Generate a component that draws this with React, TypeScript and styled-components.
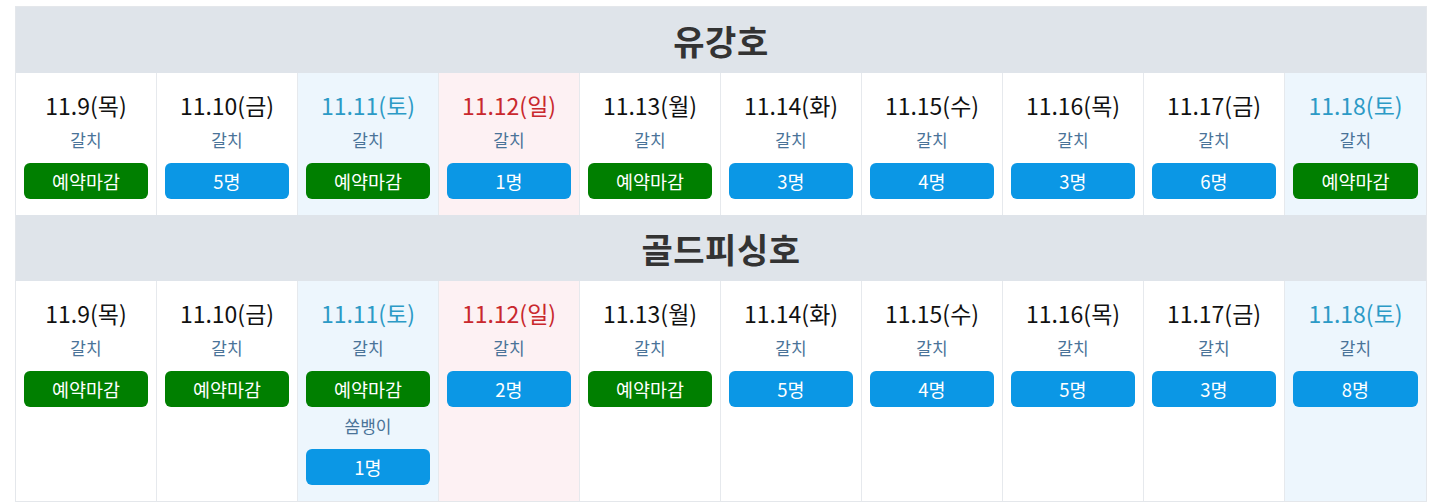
import React from "react";
import styled, { createGlobalStyle } from "styled-components";

const Global = createGlobalStyle`
  html, body { margin: 0; padding: 0; background: #ffffff; }
  body { font-family: "Noto Sans CJK KR", "Noto Sans", sans-serif; }
`;

type DayKind = "weekday" | "sat" | "sun";

interface Slot {
  fish: string;
  status: string; // "예약마감" or "N명"
}

interface Day {
  date: string;
  kind: DayKind;
  slots: Slot[];
}

interface Boat {
  name: string;
  days: Day[];
}

const dates: { date: string; kind: DayKind }[] = [
  { date: "11.9(목)", kind: "weekday" },
  { date: "11.10(금)", kind: "weekday" },
  { date: "11.11(토)", kind: "sat" },
  { date: "11.12(일)", kind: "sun" },
  { date: "11.13(월)", kind: "weekday" },
  { date: "11.14(화)", kind: "weekday" },
  { date: "11.15(수)", kind: "weekday" },
  { date: "11.16(목)", kind: "weekday" },
  { date: "11.17(금)", kind: "weekday" },
  { date: "11.18(토)", kind: "sat" },
];

const mk = (statuses: Slot[][]): Day[] =>
  dates.map((d, i) => ({ ...d, slots: statuses[i] }));

const g = (status: string): Slot[] => [{ fish: "갈치", status }];

const boats: Boat[] = [
  {
    name: "유강호",
    days: mk([
      g("예약마감"),
      g("5명"),
      g("예약마감"),
      g("1명"),
      g("예약마감"),
      g("3명"),
      g("4명"),
      g("3명"),
      g("6명"),
      g("예약마감"),
    ]),
  },
  {
    name: "골드피싱호",
    days: mk([
      g("예약마감"),
      g("예약마감"),
      [
        { fish: "갈치", status: "예약마감" },
        { fish: "쏨뱅이", status: "1명" },
      ],
      g("2명"),
      g("예약마감"),
      g("5명"),
      g("4명"),
      g("5명"),
      g("3명"),
      g("8명"),
    ]),
  },
];

const Page = styled.div`
  padding: 6px 12px 0 15px;
`;

const Table = styled.div`
  width: 1412px;
  border: 1px solid #e4e7eb;
  display: grid;
  grid-template-columns: repeat(10, 1fr);
  box-sizing: border-box;
`;

const BoatHeader = styled.div`
  grid-column: 1 / -1;
  height: 66px;
  background: #dfe4ea;
  display: flex;
  align-items: center;
  justify-content: center;
  font-size: 34px;
  font-weight: 700;
  color: #333333;
  letter-spacing: 0.5px;
`;

const dayBg: Record<DayKind, string> = {
  weekday: "#ffffff",
  sat: "#edf6fd",
  sun: "#fdf1f3",
};

const dayColor: Record<DayKind, string> = {
  weekday: "#111111",
  sat: "#2c9ac6",
  sun: "#c9282d",
};

const Cell = styled.div<{ $kind: DayKind; $last: boolean }>`
  background: ${(p) => dayBg[p.$kind]};
  border-right: ${(p) => (p.$last ? "none" : "1px solid #e6e9ed")};
  padding: 16px 8px 16px;
  display: flex;
  flex-direction: column;
  align-items: stretch;
  text-align: center;
`;

const DateText = styled.div<{ $kind: DayKind }>`
  font-size: 23px;
  line-height: 32px;
  color: ${(p) => dayColor[p.$kind]};
`;

const FishLabel = styled.div`
  margin-top: 6px;
  font-size: 17px;
  line-height: 26px;
  color: #4a7398;
`;

const StatusButton = styled.div<{ $closed: boolean }>`
  margin-top: 10px;
  height: 36px;
  border-radius: 6px;
  background: ${(p) => (p.$closed ? "#007f00" : "#0b97e5")};
  color: #ffffff;
  font-size: 18.5px;
  line-height: 36px;
  text-align: center;
`;

export default function App() {
  return (
    <Page>
      <Global />
      <Table>
        {boats.map((boat) => (
          <React.Fragment key={boat.name}>
            <BoatHeader>{boat.name}</BoatHeader>
            {boat.days.map((day, i) => (
              <Cell key={day.date} $kind={day.kind} $last={i === boat.days.length - 1}>
                <DateText $kind={day.kind}>{day.date}</DateText>
                {day.slots.map((s) => (
                  <React.Fragment key={s.fish}>
                    <FishLabel>{s.fish}</FishLabel>
                    <StatusButton $closed={s.status === "예약마감"}>{s.status}</StatusButton>
                  </React.Fragment>
                ))}
              </Cell>
            ))}
          </React.Fragment>
        ))}
      </Table>
    </Page>
  );
}
